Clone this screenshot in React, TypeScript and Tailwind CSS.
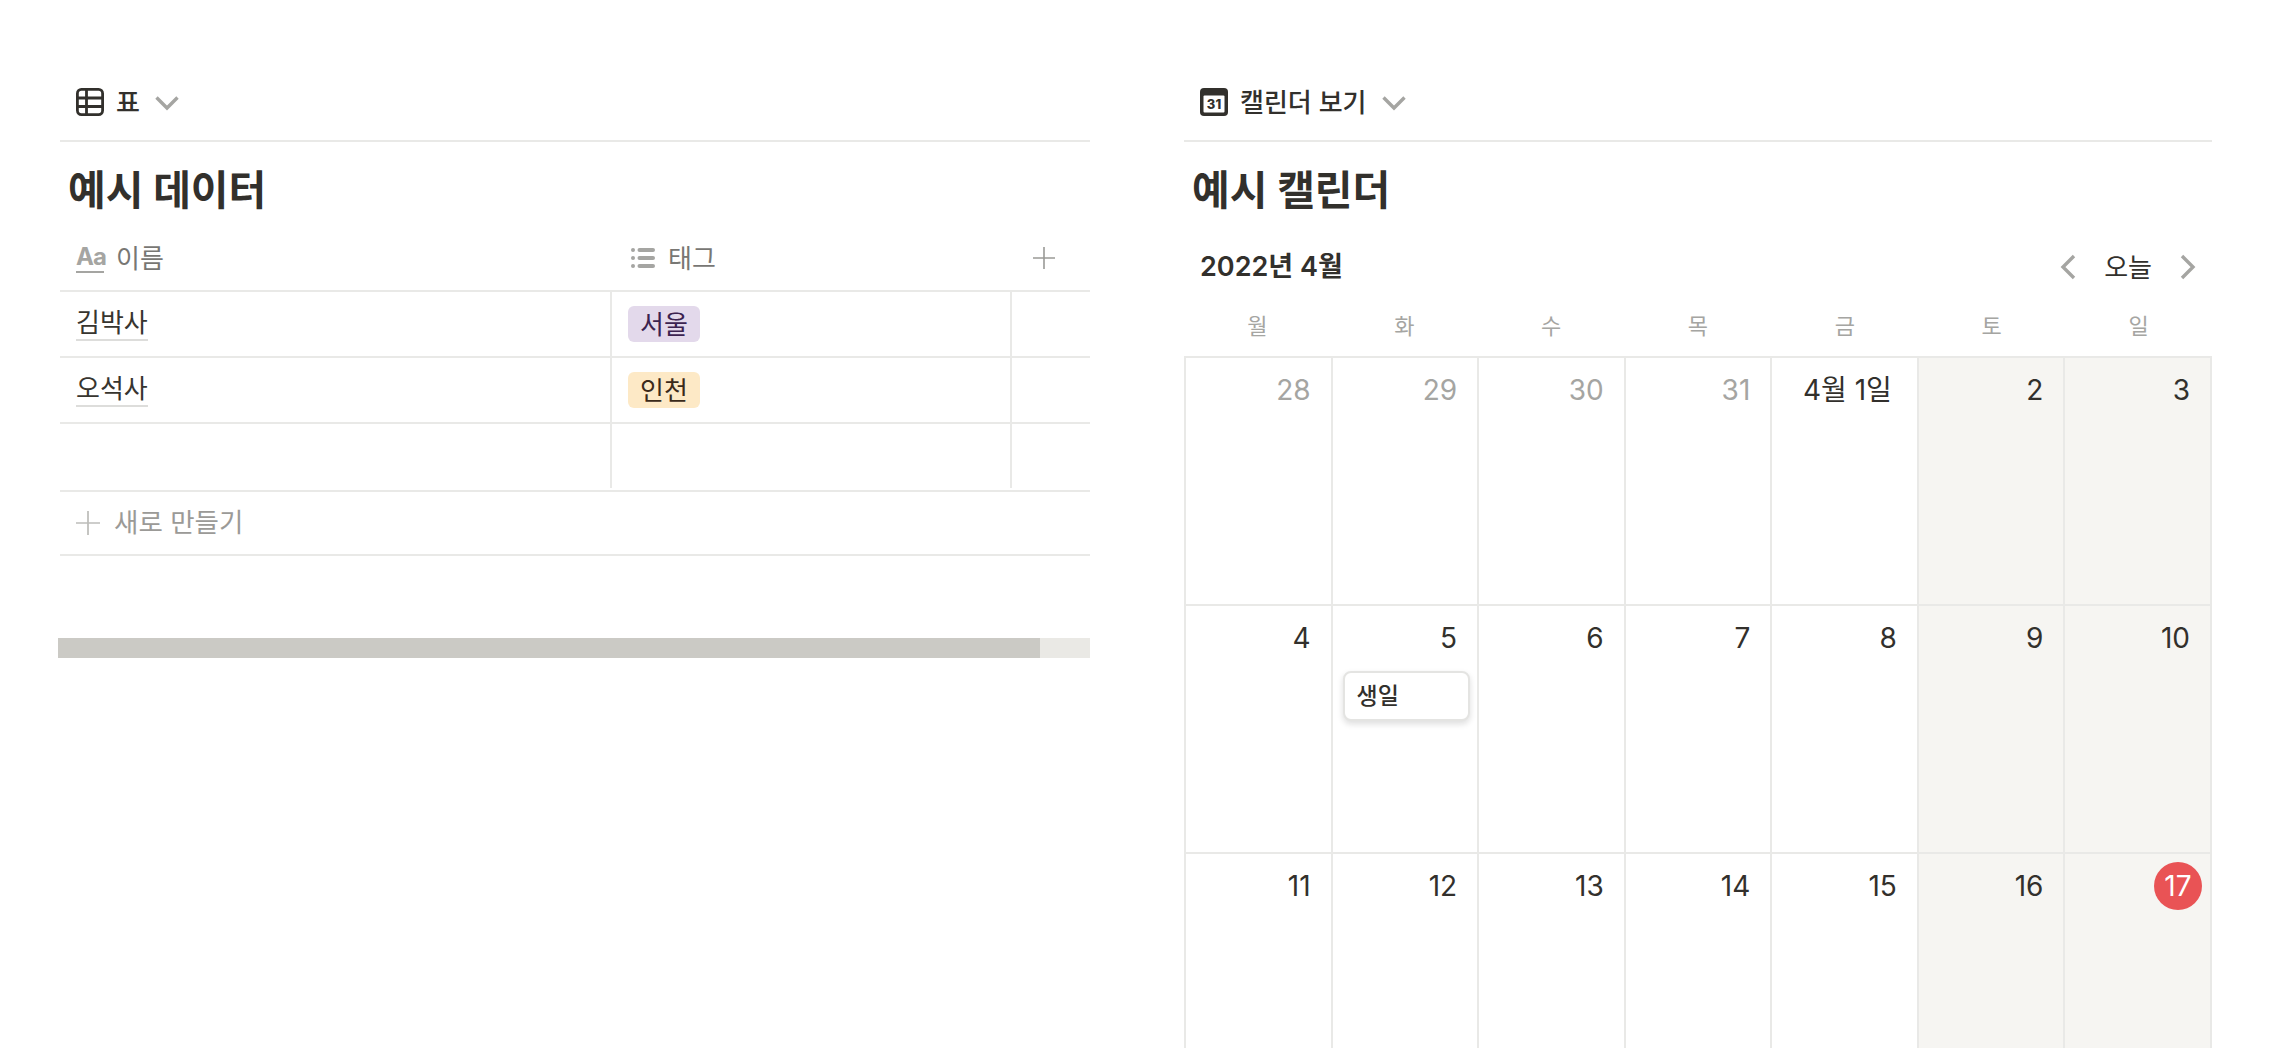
const font = "font-['Inter','Noto_Sans_CJK_KR',sans-serif]";

const Chevron = ({ dir = "down" }: { dir?: "down" | "left" | "right" }) => {
  if (dir === "down") {
    return (
      <svg width="24" height="16" viewBox="0 0 24 16" fill="none" stroke="#a5a5a2" strokeWidth="3.4">
        <path d="M1.5 2.5 12 13 22.5 2.5" />
      </svg>
    );
  }
  return (
    <svg width="16" height="26" viewBox="0 0 16 26" fill="none" stroke="#a5a5a2" strokeWidth="3.4">
      <path d={dir === "left" ? "M14 2 3 13l11 11" : "M2 2l11 11L2 24"} />
    </svg>
  );
};

const Plus = ({ color, size = 22 }: { color: string; size?: number }) => (
  <svg width={size} height={size} viewBox="0 0 22 22" fill="none" stroke={color} strokeWidth="1.6">
    <path d="M11 0v22M0 11h22" />
  </svg>
);

const TableIcon = () => (
  <svg width="28" height="28" viewBox="0 0 28 28" fill="none" stroke="#32302c" strokeWidth="2.8">
    <rect x="1.4" y="1.4" width="25.2" height="25.2" rx="4" />
    <path d="M1 10h26M1 18.5h26M10.5 1v26" />
  </svg>
);

const CalendarIcon = () => (
  <svg width="28" height="28" viewBox="0 0 28 28">
    <rect width="28" height="28" rx="4" fill="#32302c" />
    <rect x="3.5" y="7.5" width="21" height="17" rx="1" fill="#fff" />
    <text x="14" y="21" textAnchor="middle" fontSize="13" fontWeight="800" fill="#32302c" fontFamily="Inter">
      31
    </text>
  </svg>
);

const ListIcon = () => (
  <svg width="24" height="22" viewBox="0 0 24 22" fill="#a5a5a2">
    <circle cx="2" cy="3" r="2" />
    <circle cx="2" cy="11" r="2" />
    <circle cx="2" cy="19" r="2" />
    <rect x="6.5" y="1" width="17.5" height="4" rx="2" />
    <rect x="6.5" y="9" width="17.5" height="4" rx="2" />
    <rect x="6.5" y="17" width="17.5" height="4" rx="2" />
  </svg>
);

function ViewHeader({ icon, label }: { icon: React.ReactNode; label: string }) {
  return (
    <div className="h-[142px] flex items-end border-b-2 border-[#e9e9e7] pl-[16px] pb-[24px]">
      <div className="flex items-center h-[28px]">
        {icon}
        <span className="ml-[12px] text-[26px] font-medium text-[#32302c]">{label}</span>
        <span className="ml-[15px] mt-[2px] flex">
          <Chevron />
        </span>
      </div>
    </div>
  );
}

function Title({ children }: { children: string }) {
  return <h2 className="pl-[8px] pt-[24px] h-[94px] text-[41px] leading-[48px] font-bold text-[#32302c]">{children}</h2>;
}

const Name = ({ children }: { children: string }) => (
  <span className="text-[26px] leading-[32px] text-[#37352f] border-b-2 border-[#dddddb]">{children}</span>
);

const rowCols = "grid grid-cols-[552px_400px_80px] border-b-2 border-[#e9e9e7]";

function TablePanel() {
  return (
    <div className="w-[1032px] flex flex-col">
      <div className="ml-[2px]">
        <ViewHeader icon={<TableIcon />} label="표" />
        <Title>예시 데이터</Title>
        <div className={rowCols + " h-[56px] items-center pb-[10px]"}>
          <div className="flex items-center pl-[16px]">
            <span className="w-[28px] text-[24px] leading-[28px] font-bold text-[#a5a5a2] border-b-2 border-[#a5a5a2] tracking-[-1px]">Aa</span>
            <span className="ml-[12px] text-[26px] text-[#787774]">이름</span>
          </div>
          <div className="flex items-center pl-[19px]">
            <ListIcon />
            <span className="ml-[13px] text-[26px] text-[#787774]">태그</span>
          </div>
          <div className="flex pl-[21px]">
            <Plus color="#9a9a97" />
          </div>
        </div>
        <div className={rowCols + " h-[66px]"}>
          <div className="flex items-center pl-[16px] border-r-2 border-[#e9e9e7]">
            <Name>김박사</Name>
          </div>
          <div className="flex items-center pl-[16px] border-r-2 border-[#e9e9e7]">
            <span className="w-[72px] h-[36px] flex items-center justify-center rounded-[6px] bg-[#e3d9eb] text-[26px] text-[#3c2350]">서울</span>
          </div>
          <div />
        </div>
        <div className={rowCols + " h-[66px]"}>
          <div className="flex items-center pl-[16px] border-r-2 border-[#e9e9e7]">
            <Name>오석사</Name>
          </div>
          <div className="flex items-center pl-[16px] border-r-2 border-[#e9e9e7]">
            <span className="w-[72px] h-[36px] flex items-center justify-center rounded-[6px] bg-[#fde9c6] text-[26px] text-[#3b2a1a]">인천</span>
          </div>
          <div />
        </div>
        <div className={rowCols + " h-[68px] items-start"}>
          <div className="h-[64px] border-r-2 border-[#e9e9e7]" />
          <div className="h-[64px] border-r-2 border-[#e9e9e7]" />
          <div />
        </div>
        <div className="h-[64px] flex items-center pl-[16px] border-b-2 border-[#e9e9e7]">
          <Plus color="#bdbdba" size={24} />
          <span className="ml-[14px] text-[26.5px] text-[#9b9a97]">새로 만들기</span>
        </div>
      </div>
      <div className="mt-[82px] h-[20px] bg-[#eae9e5]">
        <div className="h-full w-[982px] bg-[#cbcac5]" />
      </div>
    </div>
  );
}

const weekdays = ["월", "화", "수", "목", "금", "토", "일"];
const weeks = [
  ["28", "29", "30", "31", "4월 1일", "2", "3"],
  ["4", "5", "6", "7", "8", "9", "10"],
  ["11", "12", "13", "14", "15", "16", "17"],
];

function DayCell({ label, week, col }: { label: string; week: number; col: number }) {
  const muted = week === 0 && col < 4;
  const weekend = col > 4;
  const today = label === "17";
  return (
    <div className={`h-[248px] flex flex-col border-r-2 border-b-2 border-[#e9e9e7] ${weekend ? "bg-[#f6f5f2]" : "bg-white"}`}>
      <div className="h-[58px] flex justify-end items-center pt-[6px] pr-[20px]">
        {today ? (
          <span className="w-[48px] h-[48px] mr-[-12px] flex items-center justify-center rounded-full bg-[#e95355] text-[28px] text-white">{label}</span>
        ) : (
          <span className={`text-[28px] ${label.length > 2 ? "mr-[5px]" : ""} ${muted ? "text-[#a5a5a2]" : "text-[#32302c]"}`}>{label}</span>
        )}
      </div>
      {label === "5" && (
        <div className="mt-[7px] ml-[10px] w-[127px] h-[50px] flex items-center pl-[12px] rounded-[8px] bg-white border-2 border-[#e4e4e2] shadow-[0_3px_6px_rgba(15,15,15,0.14)] text-[23px] font-medium text-[#32302c]">
          생일
        </div>
      )}
    </div>
  );
}

function CalendarPanel() {
  return (
    <div className="w-[1028px] flex flex-col">
      <ViewHeader icon={<CalendarIcon />} label="캘린더 보기" />
      <Title>예시 캘린더</Title>
      <div className="h-[68px] flex items-center justify-between pl-[16px] pr-[16px] pb-[6px]">
        <span className="text-[27px] font-semibold text-[#32302c]">2022년 4월</span>
        <div className="flex items-center">
          <Chevron dir="left" />
          <span className="mx-[28px] text-[26px] text-[#32302c]">오늘</span>
          <Chevron dir="right" />
        </div>
      </div>
      <div className="grid grid-cols-7 h-[52px] items-center pb-[8px]">
        {weekdays.map((d) => (
          <span key={d} className="text-center text-[22px] text-[#a5a5a2]">
            {d}
          </span>
        ))}
      </div>
      <div className="grid grid-cols-7 border-l-2 border-t-2 border-[#e9e9e7]">
        {weeks.map((w, i) => w.map((d, j) => <DayCell key={d} label={d} week={i} col={j} />))}
      </div>
    </div>
  );
}

export default function App() {
  return (
    <div className={`h-screen w-full overflow-hidden bg-white flex items-start pl-[58px] gap-[94px] ${font}`}>
      <TablePanel />
      <CalendarPanel />
    </div>
  );
}
